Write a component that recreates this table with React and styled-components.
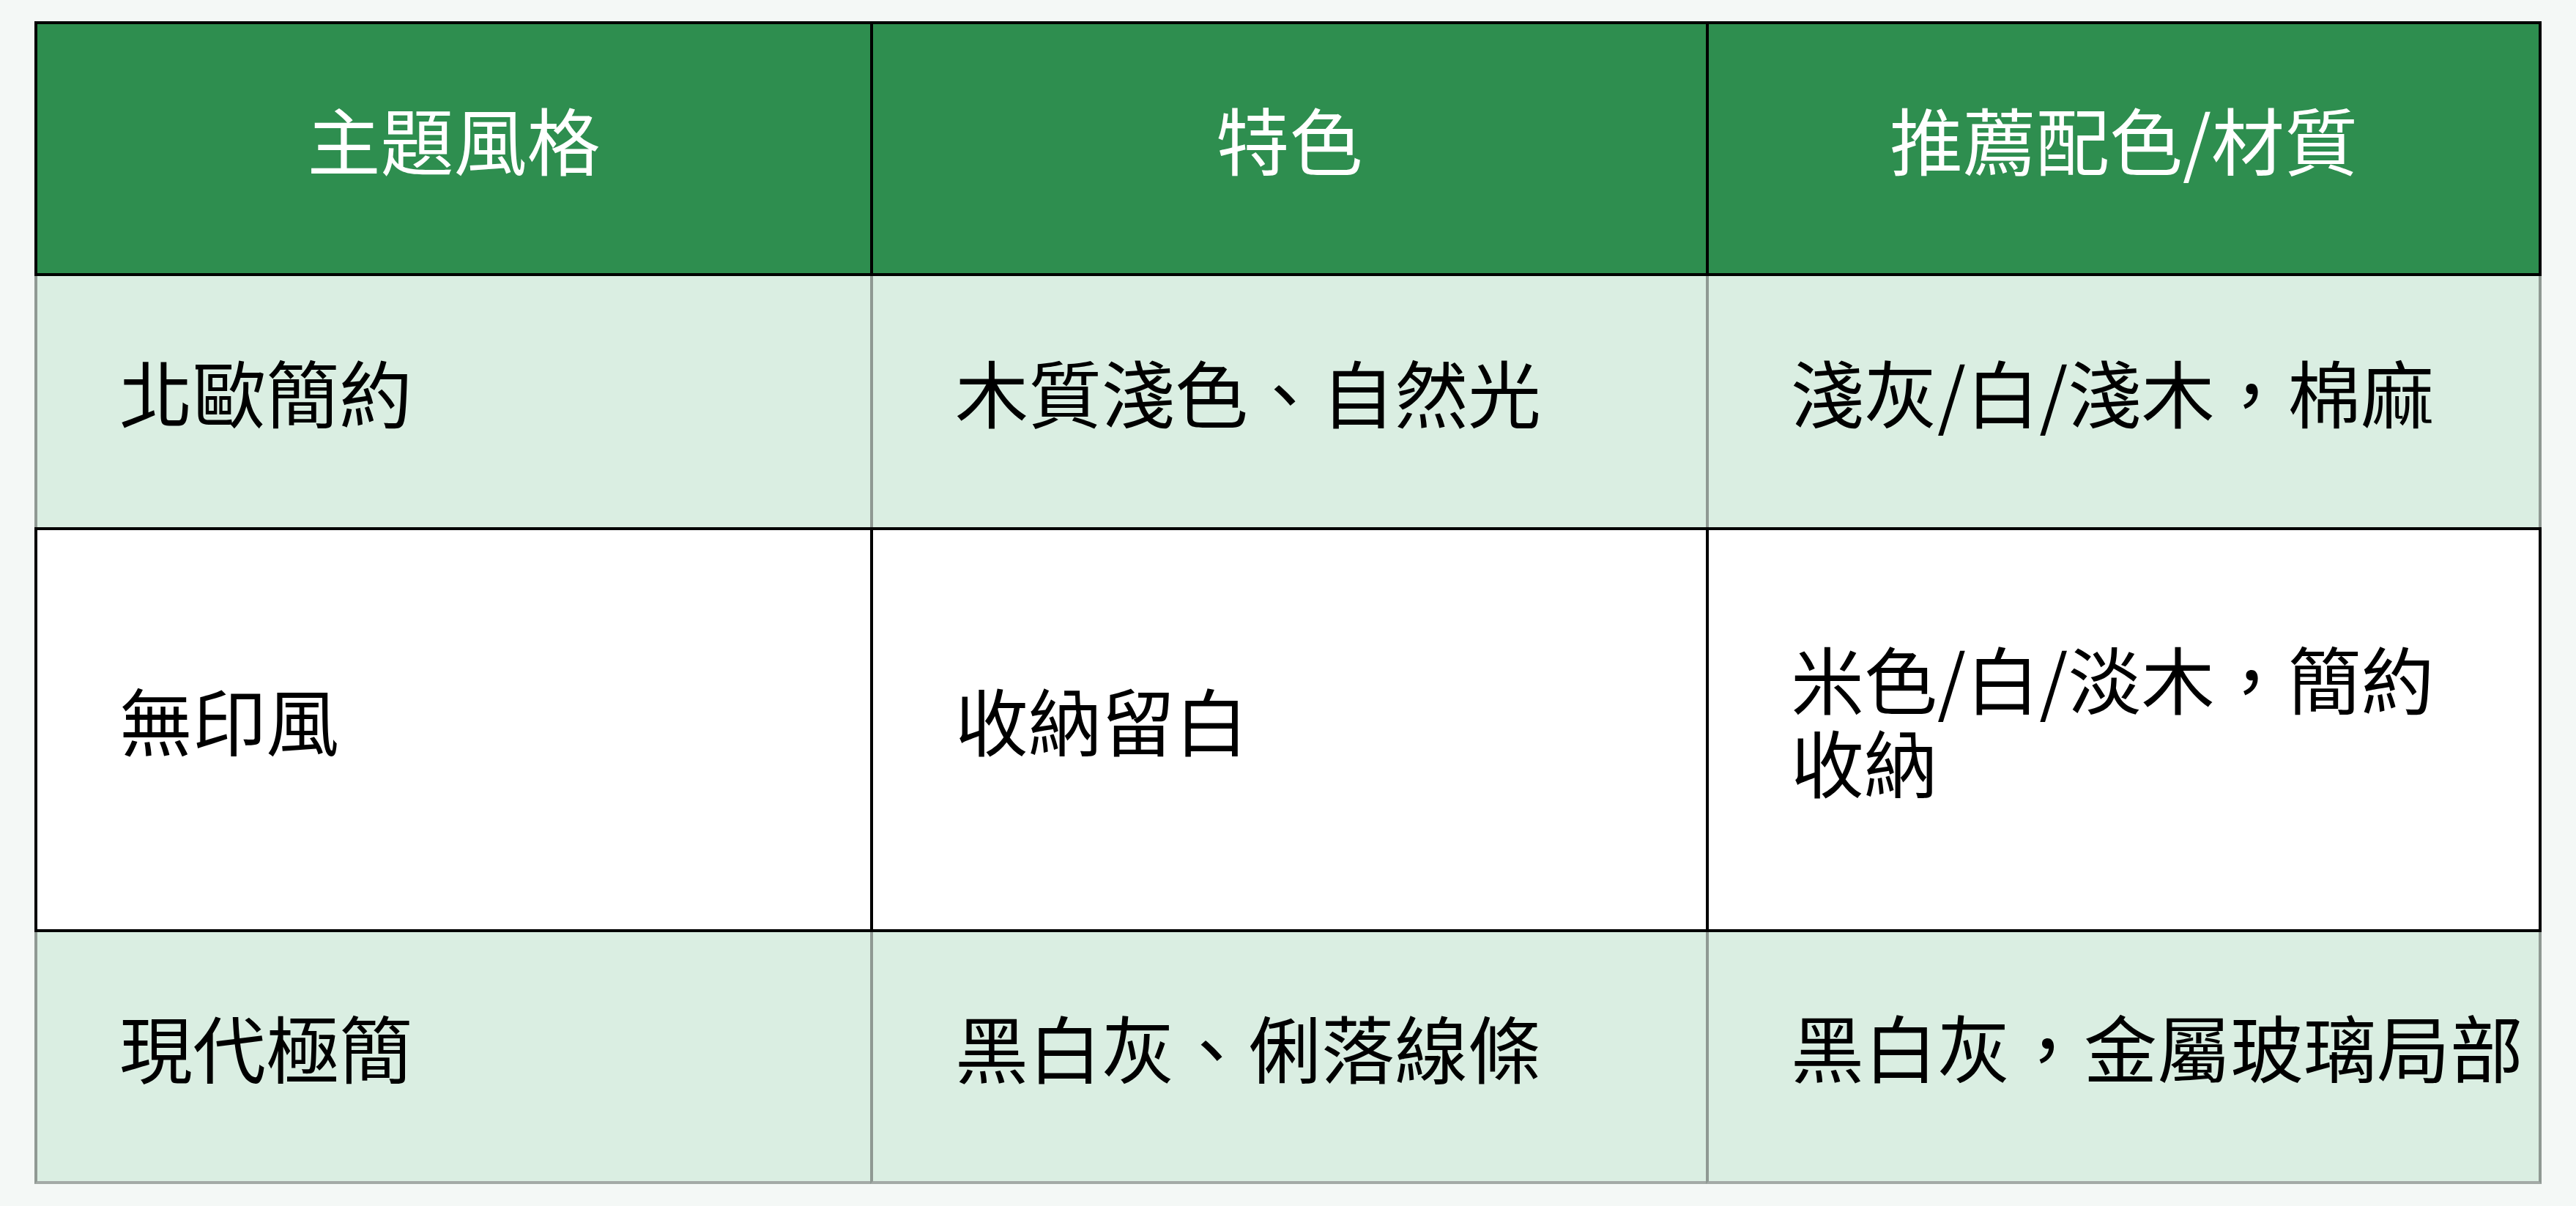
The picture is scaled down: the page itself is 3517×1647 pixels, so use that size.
import React from 'react'
import styled, { createGlobalStyle } from 'styled-components'

const GlobalStyle = createGlobalStyle`
  html, body {
    margin: 0;
    padding: 0;
    background: #f4f8f6;
  }
  body {
    font-family: "Noto Sans CJK TC", "Noto Sans", sans-serif;
  }
`

const BLACK = '#000'
const GRAY = '#8f9993'

const rows = [
  { name: '北歐簡約', feature: '木質淺色、自然光', palette: ['淺灰/白/淺木，棉麻'], shaded: true, height: 343 },
  { name: '無印風', feature: '收納留白', palette: ['米色/白/淡木，簡約', '收納'], shaded: false, height: 553 },
  { name: '現代極簡', feature: '黑白灰、俐落線條', palette: ['黑白灰，金屬玻璃局部'], shaded: true, height: 344 },
]

const App = () => {
  return (
    <Page>
      <GlobalStyle />
      <StyleTable>
        <thead>
          <Row $height={348}>
            <HeadCell>主題風格</HeadCell>
            <HeadCell>特色</HeadCell>
            <HeadCell>推薦配色/材質</HeadCell>
          </Row>
        </thead>
        <tbody>
          {rows.map((r) => (
            <Row key={r.name} $height={r.height}>
              <Cell $shaded={r.shaded}>{r.name}</Cell>
              <Cell $shaded={r.shaded}>{r.feature}</Cell>
              <Cell $shaded={r.shaded}>
                {r.palette.map((line, i) => (
                  <Line key={i}>{line}</Line>
                ))}
              </Cell>
            </Row>
          ))}
        </tbody>
      </StyleTable>
    </Page>
  )
}

export default App

const Page = styled.div`
  padding: 29px 47px 30px 47px;
  box-sizing: border-box;
`

const StyleTable = styled.table`
  width: 100%;
  table-layout: fixed;
  border-collapse: separate;
  border-spacing: 0;
  font-size: 100px;
  line-height: 1.15;
`

const Row = styled.tr`
  height: ${(p) => p.$height}px;
`

const HeadCell = styled.th`
  background: #2e8e4f;
  color: #fff;
  font-weight: 400;
  text-align: center;
  vertical-align: middle;
  padding: 0 20px 30px 20px;
  border-top: 4px solid ${BLACK};
  border-bottom: 4px solid ${BLACK};
  border-left: 4px solid ${BLACK};
  &:last-child {
    border-right: 4px solid ${BLACK};
  }
`

const Cell = styled.td`
  background: ${(p) => (p.$shaded ? '#daeee2' : '#ffffff')};
  color: #000;
  text-align: left;
  vertical-align: middle;
  white-space: nowrap;
  padding: 0 30px 30px 112px;
  border-left: 4px solid ${(p) => (p.$shaded ? GRAY : BLACK)};
  border-top: ${(p) => (p.$shaded ? 'none' : `4px solid ${BLACK}`)};
  border-bottom: ${(p) => (p.$shaded ? 'none' : `4px solid ${BLACK}`)};
  &:last-child {
    border-right: 4px solid ${(p) => (p.$shaded ? GRAY : BLACK)};
  }
  tr:last-child > & {
    border-bottom: 4px solid #a3aaa6;
  }
`

const Line = styled.div`
  line-height: 1.14;
`
